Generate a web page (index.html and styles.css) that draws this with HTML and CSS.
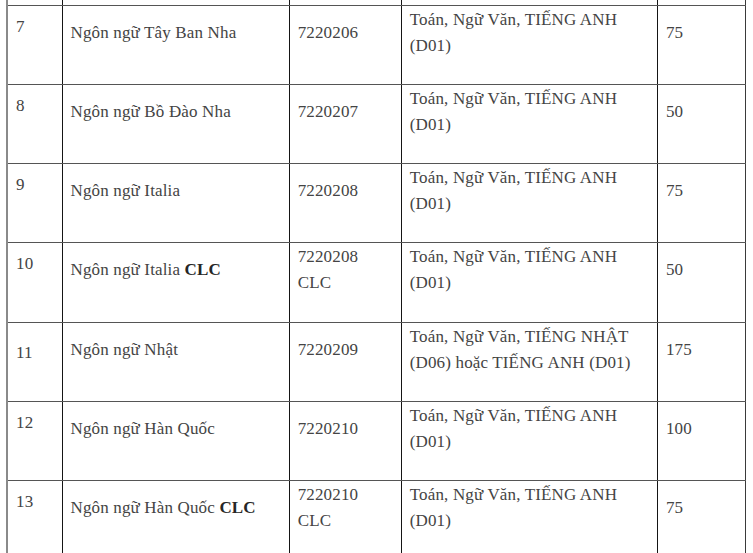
FILE: index.html
```html
<!DOCTYPE html>
<html lang="vi">
<head>
<meta charset="utf-8">
<title>Bảng chỉ tiêu</title>
<link rel="stylesheet" href="styles.css">
</head>
<body>
<table class="quota">
  <colgroup>
    <col class="c-no">
    <col class="c-name">
    <col class="c-code">
    <col class="c-subj">
    <col class="c-count">
  </colgroup>
  <tbody>
    <tr class="spacer"><td></td><td></td><td></td><td></td><td></td></tr>
    <tr>
      <td class="num">7</td>
      <td class="one">Ngôn ngữ Tây Ban Nha</td>
      <td class="one">7220206</td>
      <td class="two">Toán, Ngữ Văn, TIẾNG ANH<br>(D01)</td>
      <td class="one">75</td>
    </tr>
    <tr>
      <td class="num">8</td>
      <td class="one">Ngôn ngữ Bồ Đào Nha</td>
      <td class="one">7220207</td>
      <td class="two">Toán, Ngữ Văn, TIẾNG ANH<br>(D01)</td>
      <td class="one">50</td>
    </tr>
    <tr>
      <td class="num">9</td>
      <td class="one">Ngôn ngữ Italia</td>
      <td class="one">7220208</td>
      <td class="two">Toán, Ngữ Văn, TIẾNG ANH<br>(D01)</td>
      <td class="one">75</td>
    </tr>
    <tr class="tall">
      <td class="num">10</td>
      <td class="one">Ngôn ngữ Italia <b>CLC</b></td>
      <td class="two">7220208<br>CLC</td>
      <td class="two">Toán, Ngữ Văn, TIẾNG ANH<br>(D01)</td>
      <td class="one">50</td>
    </tr>
    <tr>
      <td class="num low">11</td>
      <td class="one">Ngôn ngữ Nhật</td>
      <td class="one">7220209</td>
      <td class="two">Toán, Ngữ Văn, TIẾNG NHẬT<br>(D06) hoặc TIẾNG ANH (D01)</td>
      <td class="one">175</td>
    </tr>
    <tr>
      <td class="num">12</td>
      <td class="one">Ngôn ngữ Hàn Quốc</td>
      <td class="one">7220210</td>
      <td class="two">Toán, Ngữ Văn, TIẾNG ANH<br>(D01)</td>
      <td class="one">100</td>
    </tr>
    <tr>
      <td class="num">13</td>
      <td class="one">Ngôn ngữ Hàn Quốc <b>CLC</b></td>
      <td class="two">7220210<br>CLC</td>
      <td class="two">Toán, Ngữ Văn, TIẾNG ANH<br>(D01)</td>
      <td class="one">75</td>
    </tr>
  </tbody>
</table>
</body>
</html>
```

FILE: styles.css
```css
html, body {
  margin: 0;
  padding: 0;
  background: #ffffff;
  overflow: hidden;
}

body {
  font-family: "Liberation Serif", "Times New Roman", serif;
  font-size: 17px;
  line-height: 26px;
  letter-spacing: 0.15px;
  color: #444444;
}

.quota {
  margin-left: 6px;
  border-collapse: collapse;
  table-layout: fixed;
  width: 740px;
  border-left: 2px solid #8a8a8a;
  border-right: 1px solid #3a3a3a;
}

.c-no { width: 55px; }
.c-name { width: 227px; }
.c-code { width: 112px; }
.c-subj { width: 256px; }
.c-count { width: 88px; }

.quota td {
  box-sizing: border-box;
  height: 79px;
  padding: 0 6px 0 8px;
  vertical-align: top;
  border-right: 1px solid #151515;
  border-bottom: 1px solid #555555;
}

.quota .tall td {
  height: 80px;
}

.quota td:last-child {
  border-right-color: #3a3a3a;
}

.quota .spacer td {
  height: 5px;
  padding: 0;
}

.quota td.num { padding-top: 8px; }
.quota td.num.low { padding-top: 17px; }
.quota td.one { padding-top: 14px; }
.quota td.two { padding-top: 1px; }

.quota b {
  font-weight: bold;
  color: #262626;
}
```
